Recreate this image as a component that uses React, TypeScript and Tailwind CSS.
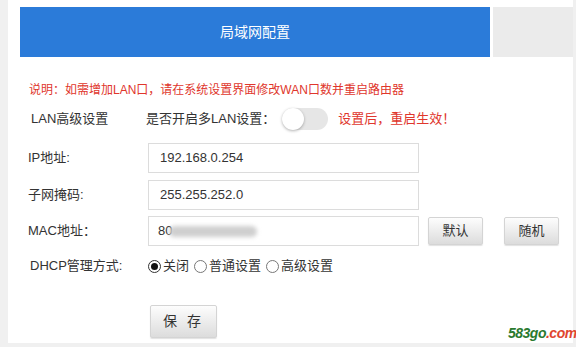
import { useState } from 'react'

const font = { fontFamily: '"Liberation Sans", "Noto Sans CJK SC", sans-serif' }

function Radio({ checked, label }: { checked: boolean; label: string }) {
  return (
    <label className="flex items-center">
      <span
        className={`w-[13px] h-[13px] rounded-full border flex items-center justify-center ${
          checked ? 'border-[#333]' : 'border-[#777]'
        }`}
      >
        {checked && <span className="w-[7px] h-[7px] rounded-full bg-[#111]" />}
      </span>
      <span className="ml-[2px]">{label}</span>
    </label>
  )
}

function GrayButton({ children, className = '' }: { children: React.ReactNode; className?: string }) {
  return (
    <button
      className={`border border-[#d4d4d4] rounded-[2px] bg-gradient-to-b from-[#fdfdfd] to-[#dcdcdc] text-[#333] shadow-[0_1px_1px_rgba(0,0,0,0.12)] ${className}`}
    >
      {children}
    </button>
  )
}

export default function App() {
  const [multiLan] = useState(false)

  return (
    <div className="relative w-[576px] h-[347px] bg-[#f0f0f0] flex text-[13px] text-[#333]" style={font}>
      <div className="ml-[8px] w-[565px] h-[343px] bg-white pt-[7px]">
        {/* Header */}
        <div className="flex h-[50px] pl-[12px]">
          <div className="w-[470px] bg-[#2b7bd9] flex items-center justify-center text-white text-[14px]">
            局域网配置
          </div>
          <div className="ml-[3px] flex-1 bg-[#ebebeb]" />
        </div>

        <div className="pl-[20px]">
          <div className="mt-[24px] h-[18px] leading-[18px] text-[12px] text-[#e0362c] pl-[1px]">
            说明：如需增加LAN口，请在系统设置界面修改WAN口数并重启路由器
          </div>

          {/* LAN advanced */}
          <div className="mt-[9px] h-[22px] flex items-center">
            <div className="w-[120px] pl-[3px]">LAN高级设置</div>
            <div className="-ml-[2px]">是否开启多LAN设置：</div>
            <div
              className={`ml-[7px] w-[46px] h-[22px] rounded-full relative ${
                multiLan ? 'bg-[#2b7bd9]' : 'bg-[#e6e6e6]'
              }`}
            >
              <div className="absolute left-0 top-0 w-[22px] h-[22px] rounded-full bg-white shadow-[0_1px_3px_rgba(0,0,0,0.3)]" />
            </div>
            <div className="ml-[10px] text-[#e0362c]">设置后，重启生效！</div>
          </div>

          {/* IP */}
          <div className="mt-[13px] flex items-center">
            <div className="w-[120px]">IP地址:</div>
            <div className="w-[271px] h-[30px] border border-[#dcdcdc] flex items-center pl-[11px]">
              192.168.0.254
            </div>
          </div>

          {/* Mask */}
          <div className="mt-[7px] flex items-center">
            <div className="w-[120px]">子网掩码:</div>
            <div className="w-[271px] h-[30px] border border-[#dcdcdc] flex items-center pl-[11px]">
              255.255.252.0
            </div>
          </div>

          {/* MAC */}
          <div className="mt-[6px] flex items-center">
            <div className="w-[120px]">MAC地址：</div>
            <div className="w-[271px] h-[30px] border border-[#dcdcdc] flex items-center pl-[9px]">
              <span>80</span>
              <span className="-ml-[3px] w-[88px] h-[11px] rounded-full bg-[#cfcfcf] blur-[2px]" />
            </div>
            <GrayButton className="ml-[9px] w-[55px] h-[28px]">默认</GrayButton>
            <GrayButton className="ml-[21px] w-[55px] h-[28px]">随机</GrayButton>
          </div>

          {/* DHCP */}
          <div className="mt-[10px] h-[20px] flex items-center">
            <div className="w-[120px] pl-[2px]">DHCP管理方式:</div>
            <div className="flex items-center gap-[5px]">
              <Radio checked label="关闭" />
              <Radio checked={false} label="普通设置" />
              <Radio checked={false} label="高级设置" />
            </div>
          </div>

          <GrayButton className="mt-[29px] ml-[122px] w-[67px] h-[33px] text-[14px] tracking-[3px]">保 存</GrayButton>
        </div>
      </div>

      {/* watermark */}
      <div className="absolute left-[508px] top-[323px] text-[14px] font-bold italic tracking-[-0.5px] whitespace-nowrap">
        <span className="text-[#2a7a2e]">583go</span>
        <span className="text-[#e0452f]">.com</span>
      </div>
    </div>
  )
}
